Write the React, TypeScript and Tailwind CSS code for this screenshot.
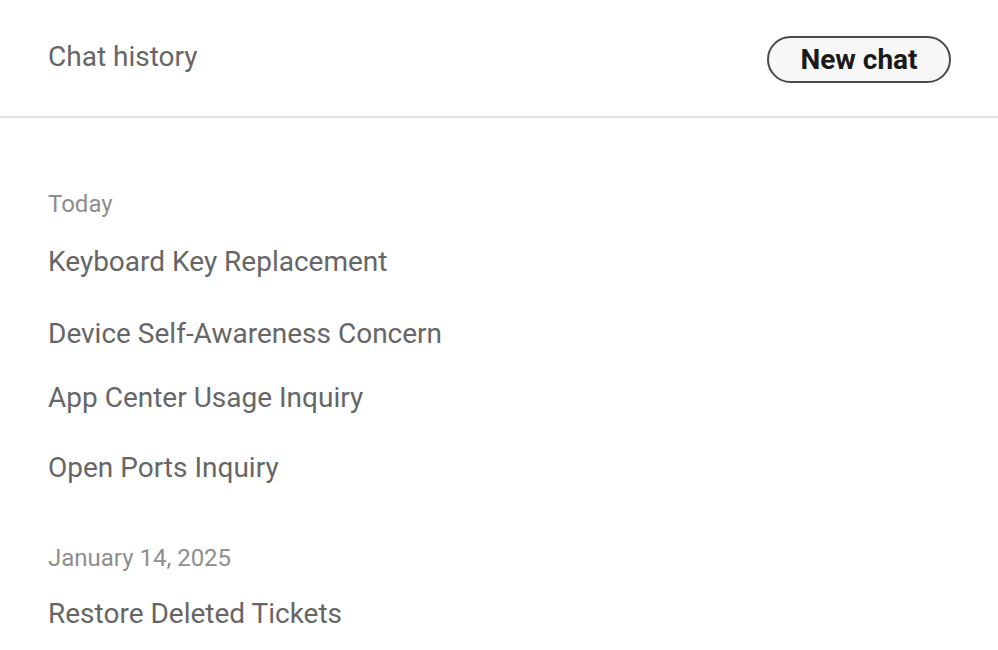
import React from "react";

export default function App() {
  return (
    <div className="w-[998px] h-[650px] bg-white overflow-hidden" style={{ fontFamily: "Roboto, 'Liberation Sans', sans-serif" }}>
      <div className="h-[116px] flex items-center justify-between pl-12 pr-[47px] border-b-2 border-[#e3e3e3] box-content">
        <div className="text-[28px] leading-[32px] text-[#666666] -mt-[3px]">Chat history</div>
        <button className="mt-[3px] w-[184px] h-[47px] rounded-full border-2 border-[#4a4a4a] bg-[#f7f7f7] text-[28px] font-bold text-[#1a1a1a] flex items-center justify-center">
          New chat
        </button>
      </div>
      <div className="pl-12 pt-[71px] flex flex-col">
        <div className="text-[24px] leading-[30px] text-[#8e8e8e]">Today</div>
        <div className="mt-[26px] text-[28px] leading-[34px] text-[#666666]">Keyboard Key Replacement</div>
        <div className="mt-[38px] text-[28px] leading-[34px] text-[#666666]">Device Self-Awareness Concern</div>
        <div className="mt-[30px] text-[28px] leading-[34px] text-[#666666]">App Center Usage Inquiry</div>
        <div className="mt-[36px] text-[28px] leading-[34px] text-[#666666]">Open Ports Inquiry</div>
        <div className="mt-[58px] text-[24px] leading-[30px] text-[#8e8e8e]">January 14, 2025</div>
        <div className="mt-[24px] text-[28px] leading-[34px] text-[#666666]">Restore Deleted Tickets</div>
      </div>
    </div>
  );
}
